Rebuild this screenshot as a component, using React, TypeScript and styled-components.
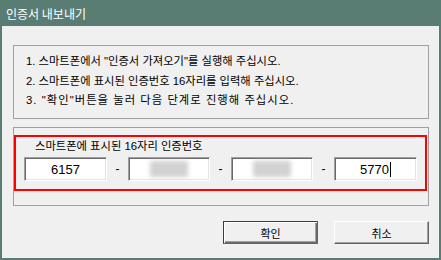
import React from "react"
import styled, { createGlobalStyle } from "styled-components"

const GlobalStyle = createGlobalStyle`
  body {
    margin: 0;
    font-family: "Liberation Sans", "Noto Sans CJK KR", sans-serif;
  }
`

const Window = styled.div`
  width: 441px;
  height: 260px;
  box-sizing: border-box;
  background: #5a7d73;
  display: flex;
  flex-direction: column;
`
const TitleBar = styled.div`
  height: 26px;
  padding-left: 6px;
  display: flex;
  align-items: center;
  color: #ffffff;
  font-family: "Noto Sans CJK KR", sans-serif;
  font-size: 12px;
`
const Client = styled.div`
  flex: 1;
  margin: 0 2px 2px;
  background: #f0f0f0;
  padding: 19px 10px 0 11px;
  display: flex;
  flex-direction: column;
  font-size: 11.3px;
  color: #000;
`
const GroupBox = styled.div<{ $height: number }>`
  height: ${p => p.$height}px;
  box-sizing: border-box;
  border: 1px solid #a0a0a0;
`
const Steps = styled.ol`
  margin: 0;
  padding: 6px 0 0 12px;
  list-style: none;
  line-height: 19.5px;
`
const Step = styled.li<{ $spread?: number }>`
  letter-spacing: ${p => p.$spread ?? 0}px;
`
const RedFrame = styled.div`
  margin-top: 7px;
  height: 56px;
  width: 413px;
  box-sizing: border-box;
  border: 2px solid #ff0000;
  padding: 2px 0 0 8px;
`
const Label = styled.div`
  padding-left: 11px;
  line-height: 14px;
  height: 14px;
`
const FieldRow = styled.div`
  margin-top: 4px;
  display: grid;
  grid-template-columns: 83px 21px 82px 21px 82px 21px 83px;
  align-items: center;
`
const Field = styled.div`
  height: 24px;
  box-sizing: border-box;
  background: #fff;
  border-top: 1px solid #a0a0a0;
  border-left: 1px solid #a0a0a0;
  border-right: 1px solid #ffffff;
  border-bottom: 1px solid #ffffff;
  box-shadow: inset 1px 1px 0 #696969, inset -1px -1px 0 #e3e3e3;
  display: flex;
  align-items: center;
  justify-content: center;
  font-size: 13px;
`
const Dash = styled.span`
  text-align: center;
  font-size: 12px;
`
const Blur = styled.span`
  width: 38px;
  height: 16px;
  background: #d2d2d2;
  filter: blur(2px);
`
const Caret = styled.span`
  display: inline-block;
  width: 1px;
  height: 15px;
  margin-left: 1px;
  background: #000;
  vertical-align: middle;
`
const ButtonRow = styled.div`
  margin-top: 15px;
  display: flex;
  justify-content: flex-end;
  gap: 16px;
`
const Button = styled.div<{ $default?: boolean }>`
  width: 95px;
  height: 23px;
  box-sizing: border-box;
  background: #f0f0f0;
  display: flex;
  align-items: center;
  justify-content: center;
  font-family: "Noto Sans CJK KR", sans-serif;
  font-size: 11px;
  border: 1px solid ${p => (p.$default ? "#3c3c3c" : "#f0f0f0")};
  border-top-color: ${p => (p.$default ? "#3c3c3c" : "#ffffff")};
  border-left-color: ${p => (p.$default ? "#3c3c3c" : "#ffffff")};
  border-right-color: #646464;
  border-bottom-color: #646464;
  box-shadow: ${p =>
    p.$default
      ? "inset 1px 1px 0 #ffffff, inset -1px -1px 0 #696969, inset -2px -2px 0 #a0a0a0"
      : "inset -1px -1px 0 #a0a0a0"};
`

export default function App() {
  return (
    <>
      <GlobalStyle />
      <Window>
        <TitleBar>인증서 내보내기</TitleBar>
        <Client>
          <GroupBox $height={74}>
            <Steps>
              <Step>1. 스마트폰에서 "인증서 가져오기"를 실행해 주십시오.</Step>
              <Step>2. 스마트폰에 표시된 인증번호 16자리를 입력해 주십시오.</Step>
              <Step $spread={1.05}>3. "확인"버튼을 눌러 다음 단계로 진행해 주십시오.</Step>
            </Steps>
          </GroupBox>
          <GroupBox $height={79} style={{ marginTop: 8 }}>
            <RedFrame>
              <Label>스마트폰에 표시된 16자리 인증번호</Label>
              <FieldRow>
                <Field>6157</Field>
                <Dash>-</Dash>
                <Field><Blur /></Field>
                <Dash>-</Dash>
                <Field><Blur /></Field>
                <Dash>-</Dash>
                <Field>5770<Caret /></Field>
              </FieldRow>
            </RedFrame>
          </GroupBox>
          <ButtonRow>
            <Button $default>확인</Button>
            <Button>취소</Button>
          </ButtonRow>
        </Client>
      </Window>
    </>
  )
}
